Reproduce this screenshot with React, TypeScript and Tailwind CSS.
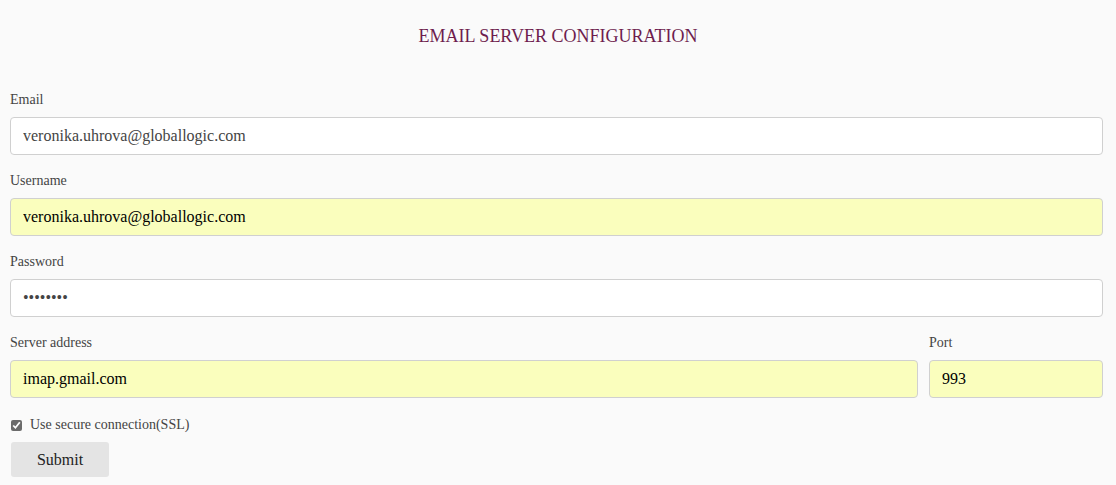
import React from 'react';

function Field({ label, value, autofill, type = 'text' }: { label: string; value: string; autofill?: boolean; type?: string }) {
  return (
    <div className="flex flex-col">
      <label className="pt-[1px] text-[14px] leading-[20px] text-[#444] mb-[7px]">{label}</label>
      <input
        type={type}
        defaultValue={value}
        className={
          autofill
            ? "h-[38px] w-full rounded-[4px] border border-[#d0d0d0] bg-[#fafebd] px-[12px] font-['Liberation_Serif',serif] text-[16px] text-black outline-none"
            : "h-[38px] w-full rounded-[4px] border border-[#d0d0d0] bg-white px-[12px] font-['Liberation_Serif',serif] text-[16px] text-[#444] outline-none"
        }
      />
    </div>
  );
}

export default function App() {
  return (
    <div className="min-h-screen w-full bg-[#fafafa] font-['Liberation_Serif',serif]">
      <div className="pl-[10px] pr-[13px] pt-[26px]">
        {/* title */}
        <h1 className="text-center text-[18px] leading-[20px] text-[#6e1d4e] pl-[3px]">EMAIL SERVER CONFIGURATION</h1>

        <div className="mt-[43px] flex flex-col gap-[15px]">
          <Field label="Email" value="veronika.uhrova@globallogic.com" />
          <Field label="Username" value="veronika.uhrova@globallogic.com" autofill />
          <Field label="Password" value="12345678" type="password" />
          <div className="flex gap-[11px]">
            <div className="flex-1">
              <Field label="Server address" value="imap.gmail.com" autofill />
            </div>
            <div className="w-[174px]">
              <Field label="Port" value="993" autofill />
            </div>
          </div>
        </div>

        {/* ssl */}
        <label className="mt-[17px] flex items-center gap-[8px] text-[14px] leading-[20px] text-[#444]">
          <input type="checkbox" defaultChecked className="ml-[1px] h-[11px] w-[11px] accent-[#6b6b6b]" />
          Use secure connection(SSL)
        </label>

        <button
          type="button"
          className="mt-[7px] ml-[1px] h-[35px] w-[98px] rounded-[3px] bg-[#e4e4e4] font-['Liberation_Serif',serif] text-[16px] text-[#222]"
        >
          Submit
        </button>
      </div>
    </div>
  );
}
